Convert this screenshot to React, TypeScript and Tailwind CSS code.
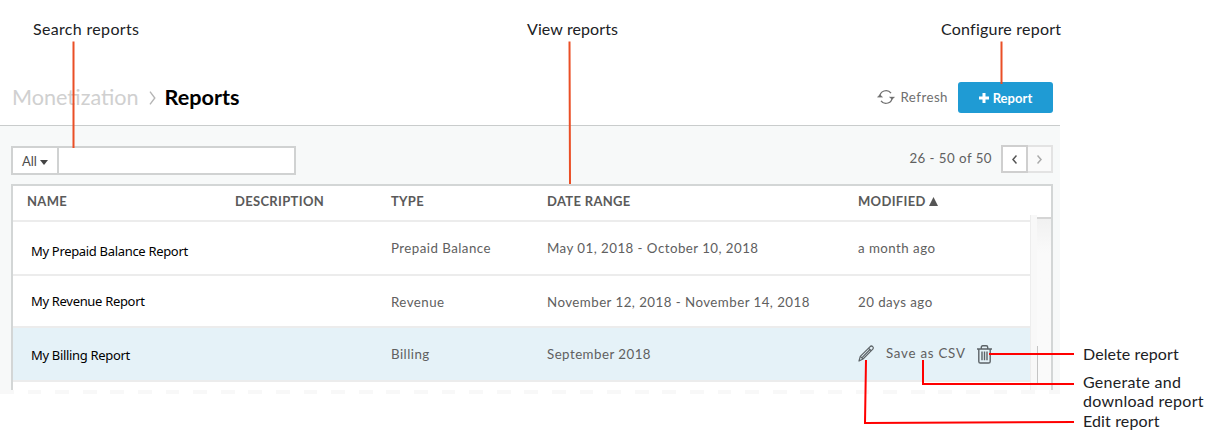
import React from "react";

const columns = ["NAME", "DESCRIPTION", "TYPE", "DATE RANGE"];

function CellText({ children, className }: { children: React.ReactNode; className: string }) {
  return <span className={`whitespace-nowrap leading-[18px] ${className}`}>{children}</span>;
}

type Row = { name: string; type: string; range: string; modified?: string };

const cell = "text-[13.3px] tracking-[0.46px] text-[#606060]";
const heading = "text-[13px] font-bold tracking-[0.32px] text-[#5a5a5a]";
const grid = "grid grid-cols-[208px_156px_156px_311px_1fr]";
const nameFont = "font-['Noto_Sans',sans-serif] text-[13px] tracking-[-0.32px] text-black";

function Refresh() {
  return (
    <svg className="h-[16px] w-[18px]" viewBox="0 0 18 16" fill="none" stroke="#707070" strokeWidth="1.3">
      <path d="M2.8 8A6.2 6.2 0 0 1 14 4.2M15.2 8A6.2 6.2 0 0 1 4 11.8" />
      <path d="M0.3 8.2 2.9 5.6l2.8 2.6zM17.7 7.9 15.1 10.5l-2.8-2.6z" fill="#707070" strokeWidth="0.3" />
    </svg>
  );
}

function Pencil() {
  return (
    <svg className="h-[17px] w-[17px]" viewBox="0 0 17 17" fill="none" stroke="#5c6367" strokeWidth="1.2" strokeLinejoin="round">
      <path d="M1 16l1.3-4.6L11.9 1.8c.8-.8 2-1 2.8-.2.9.8.7 2-.1 2.8L5 14z" />
      <path d="M10.5 3.2l2.8 2.6M2.3 11.4L5 14M12 4.5l-8.2 8.3" />
    </svg>
  );
}

function Trash() {
  return (
    <svg className="h-[19px] w-[15px]" viewBox="0 0 15 19" fill="none" stroke="#5c6367" strokeWidth="1.4">
      <path d="M0 4h15M4.3 4V2.2Q4.3.8 5.7.8h3.6q1.4 0 1.4 1.4V4M1.8 4v12.4q0 1.6 1.6 1.6h8.2q1.6 0 1.6-1.6V4M5 6.5v8.8M7.5 6.5v8.8M10 6.5v8.8" />
    </svg>
  );
}

function ReportRow({ row, className, nameClass, textClass, children }: { row: Row; className: string; nameClass: string; textClass: string; children?: React.ReactNode }) {
  return (
    <div className={`${grid} border-b-2 border-[#ececec] pl-[14px] ${className}`}>
      <div className={`flex pl-[4px] ${nameClass}`}><CellText className={nameFont}>{row.name}</CellText></div>
      <div />
      <div className={`flex ${textClass}`}><CellText className={cell}>{row.type}</CellText></div>
      <div className={`flex ${textClass}`}><CellText className={cell}>{row.range}</CellText></div>
      {children ?? <div className={`flex ${textClass}`}><CellText className={cell}>{row.modified}</CellText></div>}
    </div>
  );
}

function Callout({ className, children }: { className: string; children: React.ReactNode }) {
  return <div className={`absolute whitespace-nowrap font-['Lato',sans-serif] text-[16px] leading-[19px] text-[#202124] ${className}`}>{children}</div>;
}

export default function App() {
  return (
    <div className="relative h-[440px] w-[1215px] overflow-hidden bg-white font-['Lato',sans-serif]">
      <main className="w-[1060px]">
        <header className="flex h-[126px] items-end justify-between border-b border-[#c9cccc] pr-[7px] pl-[12px]">
          <h1 className="flex h-[41px] items-start text-[21.6px] leading-[26px]">
            <span className="whitespace-nowrap text-[#d0d0d0]">Monetization</span>
            <svg className="mt-[7px] ml-[10px] h-[14px] w-[7px]" viewBox="0 0 7 14" fill="none" stroke="#b5b5b5" strokeWidth="1.4"><path d="M1 .7l4.8 6.3L1 13.3" /></svg>
            <span className="ml-[9px] font-bold whitespace-nowrap text-black">Reports</span>
          </h1>
          <div className="flex h-[43px] items-start">
            <div className="mt-[6px] flex items-center gap-[6px]">
              <Refresh />
              <CellText className="text-[13.3px] tracking-[0.46px] text-[#707070]">Refresh</CellText>
            </div>
            <button className="ml-[10px] flex h-[31px] w-[95px] items-center justify-center rounded-[3px] bg-[#1f9bd4] pt-px text-white">
              <svg className="mr-[4px] h-[10px] w-[10px]" viewBox="0 0 10 10"><path d="M5 0v10M0 5h10" stroke="white" strokeWidth="3" /></svg>
              <span className="mt-px text-[13px] font-bold whitespace-nowrap tracking-[0.05px]">Report</span>
            </button>
          </div>
        </header>
        <section className="h-[264px] bg-[#f7f9f9] pt-[18px] pr-[7px] pl-[11px]">
          <div className="flex h-[40px] items-start justify-between">
            <div className="mt-[2px] flex h-[29px] w-[285px] border-2 border-[#d0d2d2] bg-white">
              <div className="flex w-[46px] items-center border-r-2 border-[#d0d2d2] pt-[3px] pl-[9px]">
                <span className="text-[13px] whitespace-nowrap text-[#4d4d4d]">All</span>
                <svg className="ml-[3px] h-[5px] w-[8px]" viewBox="0 0 8 5"><path d="M0 0h8L4 5z" fill="#444" /></svg>
              </div>
            </div>
            <div className="flex">
              <CellText className="mt-[5px] mr-[9px] text-[13.3px] tracking-[0.46px] text-[#606060]">26 - 50 of 50</CellText>
              <div className="mt-px flex h-[28px] w-[52px]">
                <div className="flex w-[27px] items-center justify-center border-2 border-[#cfcfcf] bg-white">
                  <svg className="h-[9px] w-[5px]" viewBox="0 0 5 9" fill="none" stroke="#555" strokeWidth="1.5"><path d="M4.5.5l-3.5 4 3.5 4" /></svg>
                </div>
                <div className="flex w-[25px] items-center justify-center border-y-2 border-r-2 border-[#e3e3e3] bg-[#fafafa]">
                  <svg className="h-[9px] w-[5px]" viewBox="0 0 5 9" fill="none" stroke="#aaa" strokeWidth="1.5"><path d="M.5.5l3.5 4-3.5 4" /></svg>
                </div>
              </div>
            </div>
          </div>
          <div className="h-[206px] overflow-hidden border-x-2 border-t-2 border-[#d3d6d6] bg-white">
            <div className={`${grid} h-[34px] pt-[6px] pl-[14px]`}>
              {columns.map((c) => <CellText key={c} className={heading}>{c}</CellText>)}
              <div className="flex items-start">
                <CellText className={heading}>MODIFIED</CellText>
                <svg className="mt-[5px] ml-[3px] h-[9px] w-[9px]" viewBox="0 0 9 9"><path d="M4.5 0L9 9H0z" fill="#555" /></svg>
              </div>
            </div>
            <div className="flex">
              <div className="w-[1018px]">
                <div className="h-[2px] bg-[#ececec]" />
                <ReportRow className="h-[54px]" nameClass="pt-[20px]" textClass="pt-[17px]" row={{ name: "My Prepaid Balance Report", type: "Prepaid Balance", range: "May 01, 2018 - October 10, 2018", modified: "a month ago" }} />
                <ReportRow className="h-[52px]" nameClass="pt-[16px]" textClass="pt-[17px]" row={{ name: "My Revenue Report", type: "Revenue", range: "November 12, 2018 - November 14, 2018", modified: "20 days ago" }} />
                <ReportRow className="h-[54px] bg-[#e5f2f8]" nameClass="pt-[18px]" textClass="pt-[17px]" row={{ name: "My Billing Report", type: "Billing", range: "September 2018" }}>
                  <div className="flex items-start">
                    <div className="mt-[17px]"><Pencil /></div>
                    <CellText className="mt-[16px] ml-[11px] text-[13.3px] tracking-[0.75px] text-[#606060]">Save as CSV</CellText>
                    <div className="mt-[17px] ml-[11px]"><Trash /></div>
                  </div>
                </ReportRow>
              </div>
              <div className="-mt-[5px] flex h-[175px] w-[21px] border-l border-[#ededed]">
                <div className="w-[6px] bg-[#f8f8f8]" />
                <div className="mt-[2px] w-[14px] border-t-2 border-[#d5d5d5] bg-linear-to-b from-[#f1f1f1] to-[#fafafa] to-20%">
                  <div className="mt-[127px] h-[38px] w-px bg-[#c4c4c4]" />
                </div>
              </div>
            </div>
          </div>
        </section>
        <div className="h-[4px] bg-[repeating-linear-gradient(90deg,#f8f8f8_0px,#f8f8f8_13.8px,#ffffff_13.8px,#ffffff_27.6px)]" />
      </main>
      <svg className="absolute inset-0 h-[440px] w-[1215px]" viewBox="0 0 1215 440" fill="none">
        <g stroke="#ea4f26" strokeWidth="2">
          <path d="M73.5 41.5V148M569.5 41.5L570 184M1001.5 41.5V84" />
        </g>
        <g stroke="#ff0000" strokeWidth="2">
          <path d="M989 354H1074M923 360V384H1074M866 360L865 423L1074 422" />
        </g>
      </svg>
      <Callout className="top-[19px] left-[33px] tracking-[0.33px]">Search reports</Callout>
      <Callout className="top-[19px] left-[527px] tracking-[0.1px]">View reports</Callout>
      <Callout className="top-[19px] left-[941px] tracking-[0.22px]">Configure report</Callout>
      <Callout className="top-[344px] left-[1083px] tracking-[0.1px]">Delete report</Callout>
      <Callout className="top-[372px] left-[1083px] tracking-[0.26px]">Generate and<br />download report</Callout>
      <Callout className="top-[411px] left-[1083px] tracking-[0.13px]">Edit report</Callout>
    </div>
  );
}
